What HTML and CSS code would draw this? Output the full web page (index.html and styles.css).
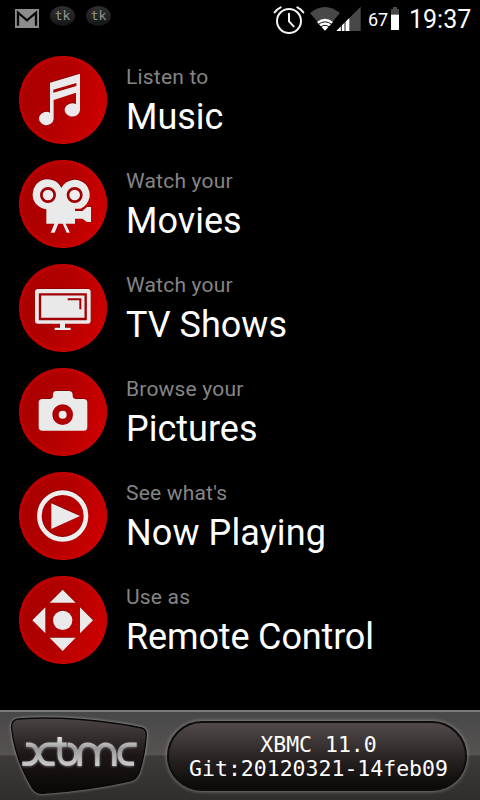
FILE: index.html
```html
<!DOCTYPE html>
<html lang="en">
<head>
<meta charset="utf-8">
<title>XBMC Remote</title>
<link rel="stylesheet" href="styles.css">
</head>
<body>
<svg class="defs" width="0" height="0" aria-hidden="true">
  <defs>
    <linearGradient id="red" x1="0" y1=".35" x2="1" y2=".65">
      <stop offset="0" stop-color="#a80000"/><stop offset=".5" stop-color="#b40000"/><stop offset="1" stop-color="#ce0000"/>
    </linearGradient>
    <radialGradient id="rim"><stop offset=".88" stop-color="#d00000" stop-opacity="0"/><stop offset="1" stop-color="#d00000" stop-opacity=".7"/></radialGradient>
    <g id="disc"><circle cx="160" cy="150" r="132" fill="url(#red)"/><circle cx="160" cy="150" r="132" fill="url(#rim)"/></g>
  </defs>
</svg>
<header class="status">
  <div class="notes">
    <svg class="mail" width="24" height="19" viewBox="0 0 72 57"><path fill="#8c8c8c" d="M0 0h72v57H0z"/><path fill="none" stroke="#080808" stroke-width="7" d="M9 50V11l27 23 27-23v39"/></svg>
    <span class="bubble">tk</span>
    <span class="bubble">tk</span>
  </div>
  <div class="system">
    <svg class="signals" width="108" height="40" viewBox="0 0 324 120">
      <g fill="none" stroke="#f4f4f4" stroke-width="6" stroke-linecap="round"><circle cx="87" cy="63" r="36"/><path d="M87 41v23l14 15M44 37q7-10 18-15M112 22q11 5 18 15"/></g>
      <path fill="#484848" d="M180 39Q225 3 270 39L225 92z" transform="translate(-30)"/>
      <path fill="#fff" d="M171 66Q195 46 219 66L195 92z"/>
      <path fill="none" stroke="#161616" stroke-width="3" d="M175 73q20-15 40 0M182 81q13-10 26 0"/>
      <path fill="#484848" d="M302 20v73h-73z"/>
      <path fill="#fff" d="M268 54v39h-39z"/>
      <path stroke="#161616" stroke-width="3" d="M244 72v21M255 60v33"/>
    </svg>
    <span class="percent">67</span>
    <svg class="battery" width="8" height="23" viewBox="0 0 24 69"><path fill="#484848" d="M6 0h12v6h6v20H0V6h6z"/><path fill="#fff" d="M0 23h24v46H0z"/></svg>
    <time class="clock">19:37</time>
  </div>
</header>
<main class="menu">
  <a class="item">
    <svg class="icon" viewBox="28 18 264 264"><use href="#disc"/><g class="glyph"><path fill-rule="evenodd" d="M121 98L211 71V181A23 20 0 1 1 199 162V128L132 150V207A22 20 0 1 1 121 188zM131 119v9l69-20v-9z"/></g></svg>
    <span class="label"><small>Listen to</small><b>Music</b></span>
  </a>
  <a class="item">
    <svg class="icon" viewBox="28 18 264 264"><use href="#disc"/><g class="glyph"><path d="M69 122a45 45 0 0 1 86-20 45 45 0 1 1 57 62h-16v7h22l14-12h12v45h-12l-14-10h-22v15h-28l13 27h-10l-12-27h-13l-11 27h-12l11-27h-24v-43A45 45 0 0 1 69 122z"/></g><g fill="#eee" stroke="#a30004" stroke-width="8"><circle cx="115" cy="123" r="20"/><circle cx="195" cy="123" r="20"/></g></svg>
    <span class="label"><small>Watch your</small><b>Movies</b></span>
  </a>
  <a class="item">
    <svg class="icon" viewBox="28 18 264 264"><use href="#disc"/><g class="glyph"><path d="M85 93H235q8 0 8 9v86q0 9-8 9h-69v12h17v7h-48v-7h16v-12H85q-9 0-9-9v-86q0-9 9-9z"/></g><path fill="#e9e9e9" stroke="#a30004" stroke-width="7" d="M91 109h137v74H91z"/><path fill="none" stroke="#a30004" stroke-width="6" d="M174 124h38v30"/></svg>
    <span class="label"><small>Watch your</small><b>TV Shows</b></span>
  </a>
  <a class="item">
    <svg class="icon" viewBox="28 18 264 264"><use href="#disc"/><g class="glyph"><path d="M98 111h24q7 0 8-8v-6q1-10 10-10h38q9 0 11 10v6q1 8 8 8h25q11 0 11 11v73q0 11-11 11H98q-11 0-11-11v-73q0-11 11-11z"/></g><circle cx="159" cy="158" r="21.5" fill="#eee" stroke="#b00004" stroke-width="19"/></svg>
    <span class="label"><small>Browse your</small><b>Pictures</b></span>
  </a>
  <a class="item">
    <svg class="icon" viewBox="28 18 264 264"><use href="#disc"/><g class="glyph"><circle cx="159" cy="150" r="70" fill="none" stroke="#eee" stroke-width="14"/><path d="M125 112l86 38-86 39z"/></g></svg>
    <span class="label"><small>See what's</small><b class="spread">Now Playing</b></span>
  </a>
  <a class="item">
    <svg class="icon" viewBox="28 18 264 264"><use href="#disc"/><g class="glyph"><circle cx="159" cy="151" r="29"/><path d="M159 59l39 39h-78zM159 243l-39-40h78zM68 151l39-39v78zM250 151l-39-39v78z"/></g></svg>
    <span class="label"><small>Use as</small><b class="tight">Remote Control</b></span>
  </a>
</main>
<footer class="bar">
  <svg class="logo" width="160" height="90" viewBox="0 30 480 270">
    <defs>
      <linearGradient id="plate" x1="0" y1="0" x2="0" y2="1"><stop offset="0" stop-color="#4b4444"/><stop offset=".5" stop-color="#1c1716"/><stop offset="1" stop-color="#090605"/></linearGradient>
      <linearGradient id="silver" gradientUnits="userSpaceOnUse" x1="0" y1="110" x2="0" y2="200"><stop offset="0" stop-color="#e8e8e8"/><stop offset=".4" stop-color="#999"/><stop offset="1" stop-color="#d0d0d0"/></linearGradient>
    </defs>
    <path class="plate" fill="url(#plate)" d="M54 57C170 48 320 61 426 84Q440 89 439 106Q435 165 418 217Q410 239 390 243Q270 270 130 280Q108 282 96 262C66 212 42 150 35 86Q32 60 54 57z"/>
    <g class="word" fill="none" stroke="url(#silver)" stroke-width="13" stroke-linejoin="round">
      <path d="M78 134H88C122 134 108 191 146 191H164M67 191H85C121 191 108 134 146 134H200"/>
      <path d="M179 111V164C179 181 188 191 203 191C219 191 229 179 229 163C229 146 219 134 203 134"/>
      <path d="M239 198V164C239 144 249 134 263 134C281 134 292 147 292 164V198M292 164C292 146 304 134 316 134C333 134 343 148 343 164V198"/>
      <path d="M410 134H388C369 134 359 147 359 163C359 180 369 191 386 191H402"/>
    </g>
  </svg>
  <div class="version"><span>XBMC 11.0</span><span>Git:20120321-14feb09</span></div>
</footer>
</body>
</html>
```
FILE: styles.css
```css
* { box-sizing: border-box; }
body {
  margin: 0;
  width: 480px;
  height: 800px;
  overflow: hidden;
  display: flex;
  flex-direction: column;
  background: #000;
  color: #fff;
  font-family: Roboto, sans-serif;
}
svg { display: block; }
.defs { flex: none; }
.status { height: 40px; display: flex; justify-content: space-between; }
.notes { display: flex; padding: 6px 0 0 15px; }
.mail { margin: 3px 11px 0 0; }
.bubble {
  width: 25px;
  height: 20px;
  margin-right: 11px;
  border-radius: 50%;
  background: linear-gradient(#303030, #161616);
  color: #959595;
  font: 13px/19px "DejaVu Sans Mono", monospace;
  text-align: center;
}
.system { display: flex; width: 230px; }
.signals { flex: none; margin-left: 10px; }
.percent { width: 20px; font-size: 18px; line-height: 40px; }
.battery { flex: none; margin: 7px 0 0 3px; }
.clock { margin-left: 10px; font-size: 25px; line-height: 39px; white-space: nowrap; }
.menu { height: 670px; padding: 16px 19px 0; display: flex; flex-direction: column; gap: 16px; }
.item { height: 88px; display: flex; gap: 19px; }
.icon { width: 88px; height: 88px; flex: none; }
.glyph { fill: #eaeaea; filter: drop-shadow(0 -2px 2px #600000aa); }
.label { display: flex; flex-direction: column; white-space: nowrap; }
.label small { height: 42px; font-size: 21px; line-height: 42px; color: #858585; letter-spacing: .2px; }
.label b { font-size: 36px; font-weight: 400; line-height: 38px; }
.label .tight { letter-spacing: -.15px; }
.label .spread { letter-spacing: .1px; }
.bar {
  height: 90px;
  border-top: 2px solid #7e7b7e;
  display: flex;
  background: linear-gradient(#484848, #575252 43px, #3d3a39 44px, #302d2c);
}
.logo { flex: none; margin-top: -2px; }
.plate { stroke: #090707; stroke-width: 4; filter: drop-shadow(0 0 5px #aaa); }
.word { filter: drop-shadow(0 2px 3px #777); }
.version {
  width: 300px;
  height: 70px;
  margin: 9px 0 0 7px;
  padding: 10px 0 0 3px;
  border: 2px solid #100d0d;
  border-radius: 35px;
  background: linear-gradient(#524a4a, #241f1f 60%, #0b0807);
  box-shadow: 0 0 4px #999;
  display: flex;
  flex-direction: column;
  align-items: center;
  font: 21.5px/24px "DejaVu Sans Mono", monospace;
}
```
